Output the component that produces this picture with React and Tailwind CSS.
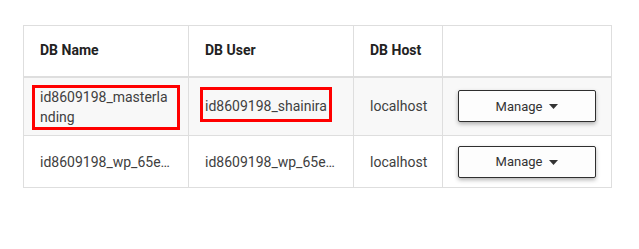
import React from "react";

const rows = [
  { name: "id8609198_masterlanding", user: "id8609198_shainira", host: "localhost", marked: true },
  { name: "id8609198_wp_65e4c1a2b3", user: "id8609198_wp_65e4c1a2b3", host: "localhost", marked: false },
];

function ManageButton() {
  return (
    <button className="flex h-[32px] w-full items-center justify-center gap-[7px] rounded-[2px] border border-[#2f2f2f] bg-[#fdfdfd] pt-[1px] text-[13px] text-[#333] shadow-[0_2px_4px_rgba(0,0,0,0.3)]">
      <span>Manage</span>
      <svg width="9" height="5" viewBox="0 0 9 5">
        <path d="M0 0h9L4.5 5z" fill="#333" />
      </svg>
    </button>
  );
}

export default function App() {
  return (
    <div className="min-h-[249px] w-[639px] bg-white pl-[23px] pt-[25px] font-['Roboto',sans-serif] text-[14px] text-[#404040]">
      <table className="w-[588px] table-fixed border-collapse border border-[#dedede]">
        <colgroup>
          <col className="w-[165px]" />
          <col className="w-[165px]" />
          <col className="w-[89px]" />
          <col className="w-[169px]" />
        </colgroup>
        <thead>
          <tr className="h-[51px] border-b-2 border-[#dedede]">
            <th className="border-r border-[#dedede] px-[16px] text-left font-bold text-[#222]">DB Name</th>
            <th className="border-r border-[#dedede] px-[16px] text-left font-bold text-[#222]">DB User</th>
            <th className="border-r border-[#dedede] px-[16px] text-left font-bold text-[#222]">DB Host</th>
            <th />
          </tr>
        </thead>
        <tbody>
          {rows.map((r, i) => (
            <tr
              key={i}
              className={`border-b border-[#dedede] ${i === 0 ? "h-[59px] bg-[#f8f8f8]" : "h-[52px] bg-white"}`}
            >
              <td className="relative border-r border-[#dedede] px-[16px] leading-[20px]">
                {r.marked ? (
                  <>
                    <div className="break-all pt-[1px]">{r.name}</div>
                    <div className="pointer-events-none absolute left-[8px] right-[8px] top-[7px] bottom-[5px] border-[3px] border-[#f00]" />
                  </>
                ) : (
                  <div className="truncate">{r.name}</div>
                )}
              </td>
              <td className="relative border-r border-[#dedede] px-[16px] leading-[20px]">
                <div className={r.marked ? "" : "truncate"}>{r.user}</div>
                {r.marked && (
                  <div className="pointer-events-none absolute left-[11px] w-[132px] top-[9px] h-[35px] border-[3px] border-[#f00]" />
                )}
              </td>
              <td className="border-r border-[#dedede] px-[16px] leading-[20px]">{r.host}</td>
              <td className="px-[15px]">
                <ManageButton />
              </td>
            </tr>
          ))}
        </tbody>
      </table>
    </div>
  );
}
